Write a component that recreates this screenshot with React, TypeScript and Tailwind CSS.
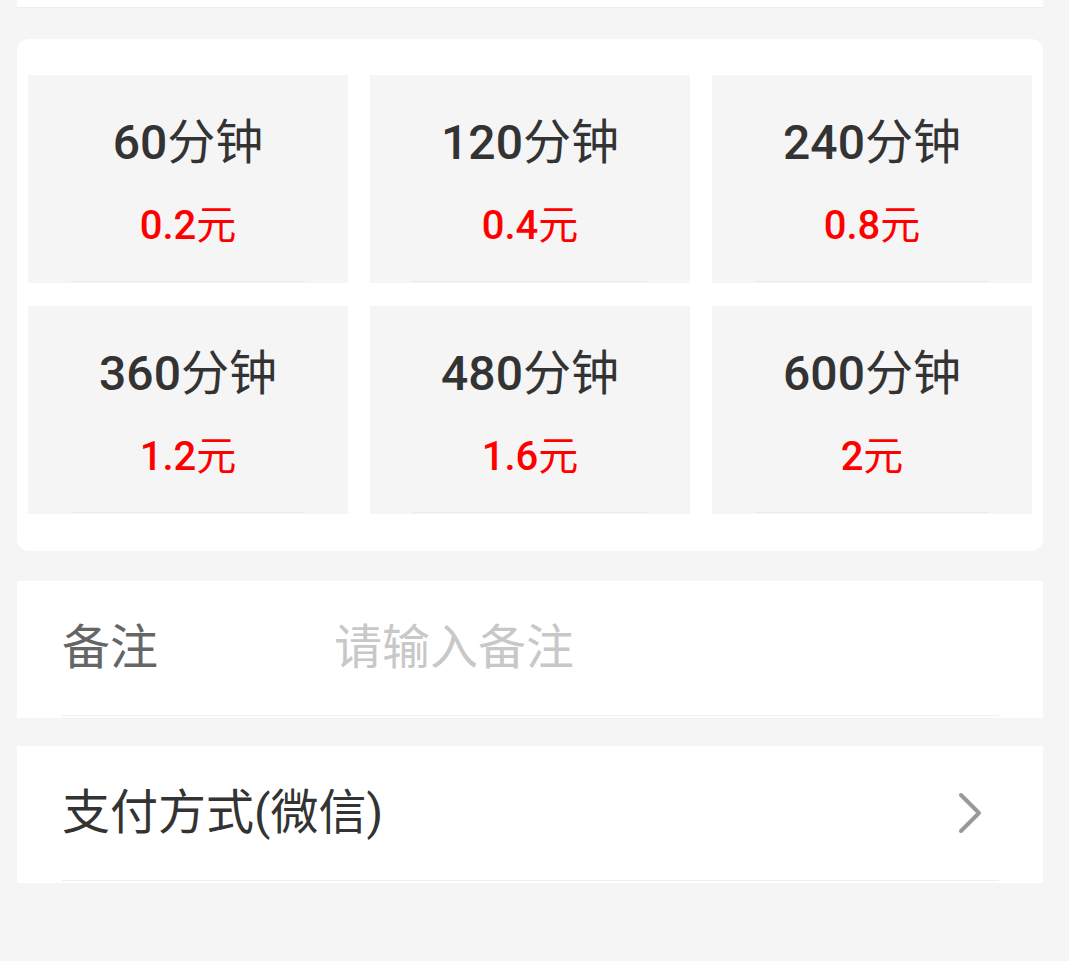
import React from "react";

const tiles = [
  { n: "60", t: "分钟", pn: "0.2", pu: "元" },
  { n: "120", t: "分钟", pn: "0.4", pu: "元" },
  { n: "240", t: "分钟", pn: "0.8", pu: "元" },
  { n: "360", t: "分钟", pn: "1.2", pu: "元" },
  { n: "480", t: "分钟", pn: "1.6", pu: "元" },
  { n: "600", t: "分钟", pn: "2", pu: "元" },
];

export default function App() {
  return (
    <div
      className="min-h-screen bg-[#f5f5f5] pb-10"
      style={{ fontFamily: 'Roboto, "Noto Sans CJK SC", sans-serif' }}
    >
      <div className="ml-[17px] w-[1026px]">
        <div className="h-[8px] bg-white border-b border-[#ececec]" />

        <div className="mt-[31px] rounded-[12px] bg-white pt-[36px] pb-[37px] px-[11px] grid grid-cols-3 gap-x-[22px] gap-y-[23px]">
          {tiles.map((x) => (
            <div key={x.n} className="h-[208px] bg-[#f5f5f5] flex flex-col items-center">
              <div className="mt-[44px] text-[48px] leading-[48px] text-[#333333] whitespace-nowrap">
                <span className="font-medium">{x.n}</span>
                <span className="font-normal">{x.t}</span>
              </div>
              <div className="mt-[39px] text-[40px] leading-[40px] text-[#ff0000] whitespace-nowrap">
                <span className="font-medium">{x.pn}</span>
                <span className="font-normal">{x.pu}</span>
              </div>
              <div className="mt-auto mb-px self-stretch mx-[43px] h-px bg-[#ebebeb]" />
            </div>
          ))}
        </div>

        <div className="mt-[30px] bg-white flex flex-col">
          <div className="h-[134px] flex items-center px-[45px]">
            <div className="w-[272px] text-[48px] text-[#666666]">备注</div>
            <div className="text-[48px] text-[#c8c8c8]">请输入备注</div>
          </div>
          <div className="mx-[45px] mr-[44px] h-px bg-[#eeeeee]" />
          <div className="h-[2px]" />
        </div>

        <div className="mt-[28px] bg-white flex flex-col">
          <div className="h-[134px] flex items-center pl-[45px] pr-[58px]">
            <div className="flex-1 text-[48px] text-[#333333]">支付方式(微信)</div>
            <svg width="28" height="44" viewBox="0 0 28 44" fill="none">
              <polyline
                points="4,4 22,22 4,40"
                stroke="#999999"
                strokeWidth="4"
                strokeLinecap="round"
                strokeLinejoin="round"
              />
            </svg>
          </div>
          <div className="mx-[45px] mr-[44px] h-px bg-[#eeeeee]" />
          <div className="h-[2px]" />
        </div>
      </div>
    </div>
  );
}
